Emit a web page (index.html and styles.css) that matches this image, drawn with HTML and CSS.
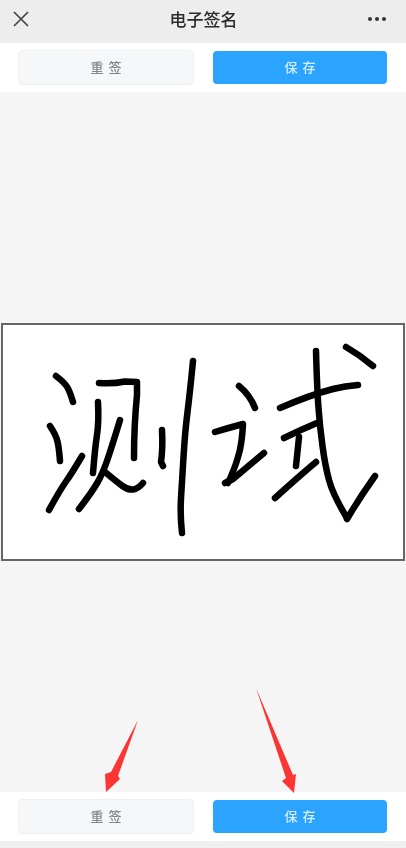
FILE: index.html
```html
<!doctype html>
<html lang="zh-CN">
<head>
    <meta charset="UTF-8">
    <title>电子签名</title>
    <link rel="stylesheet" href="styles.css">
</head>
<body>
    <div class="page">
        <header class="titlebar">
            <svg class="icon" width="16" height="16" viewBox="0 0 16 16">
                <path d="M1 1 L15 15 M15 1 L1 15" class="close-x"/>
            </svg>
            <div class="title">电子签名</div>
            <svg class="icon icon-more" width="18" height="6" viewBox="0 0 18 6">
                <circle cx="2" cy="3" r="2"/>
                <circle cx="9" cy="3" r="2"/>
                <circle cx="16" cy="3" r="2"/>
            </svg>
        </header>

        <div class="toolbar">
            <button class="btn btn-reset">重签</button>
            <button class="btn btn-save">保存</button>
        </div>

        <main class="board">
            <div class="canvas">
                <svg class="signature" viewBox="3 325 400 234">
                    <!-- 测 -->
                    <path d="M56 376 Q65 383 67.5 387.5 Q70 392 73 402"/>
                    <path d="M50 426 Q56 435 57.5 441.5 Q59 448 60 461"/>
                    <path d="M82 456 Q72 473 66 481.5 Q60 490 49 510"/>
                    <path d="M98 402 Q99 422 97 435 Q95 448 93 473"/>
                    <path d="M99 383 Q113 384 125 381.5 L137 382 L137 395 Q134 425 134 458"/>
                    <path d="M120 420 Q113 443 108 458 Q103 473 97.5 482.5 Q92 492 79 509"/>
                    <path d="M105 472 Q117 482 122.5 486 Q128 490 133 489.5 Q138 489 143 483"/>
                    <path d="M162 430 Q163 448 161 462 L163 466"/>
                    <path d="M193 361 Q190 392 187.5 412 Q185 432 183.5 457 Q182 482 181 498 Q180 515 182 533"/>
                    <!-- 试 -->
                    <path d="M239 386 Q250 395 255 408"/>
                    <path d="M215 432 Q228 428 243 424 Q242 445 238 457 Q235 468 228 483"/>
                    <path d="M225 483 L233 479 L264 453"/>
                    <path d="M280 408 Q310 395 333 389 Q345 386 358 385"/>
                    <path d="M316 351 Q317 388 318.5 408 Q320 428 322.5 446 Q325 465 329 480 Q333 495 347 518"/>
                    <path d="M346 347 Q360 355 373 366"/>
                    <path d="M284 438 Q300 430 317 423"/>
                    <path d="M299 437 L296 466"/>
                    <path d="M275 498 Q297 478 316 462"/>
                    <path d="M347 519 Q360 497 375 476"/>
                </svg>
            </div>
        </main>

        <div class="toolbar">
            <button class="btn btn-reset">重签</button>
            <button class="btn btn-save">保存</button>
        </div>
        <div class="bottom-strip"></div>

        <!-- red annotation arrows drawn over the screenshot -->
        <svg class="arrows" width="406" height="848" viewBox="0 0 406 848">
            <polygon points="138,720 111,772 105,774 106,792 120,779 118,776"/>
            <polygon points="256,688 286,778 282,781 294,793 296,774 293,775"/>
        </svg>
    </div>
</body>
</html>
```

FILE: styles.css
```css
* {
    box-sizing: border-box;
}

body {
    margin: 0;
    font-family: "Noto Sans CJK SC", "Liberation Sans", sans-serif;
    background-color: #f5f5f5;
}

.page {
    position: relative;
    width: 406px;
    height: 848px;
    display: flex;
    flex-direction: column;
    overflow: hidden;
    filter: blur(0.5px);
}

.titlebar {
    height: 43px;
    flex: none;
    padding: 0 12px 6px 13px;
    display: grid;
    grid-template-columns: 1fr auto 1fr;
    align-items: center;
    background-color: #ededed;
    color: #2b2b2b;
}

.title {
    font-size: 17px;
    line-height: 24px;
    font-weight: 500;
    margin-top: 1px;
}

.icon {
    display: block;
    fill: #333333;
}

.icon-more {
    justify-self: end;
    margin-right: 8px;
}

.close-x {
    fill: none;
    stroke: #444444;
    stroke-width: 1.7;
}

.toolbar {
    height: 49px;
    flex: none;
    padding: 0 19px 0 18px;
    display: grid;
    grid-template-columns: 176px 174px;
    column-gap: 19px;
    align-items: center;
    background-color: #ffffff;
}

.btn {
    font-family: inherit;
    font-size: 13px;
    font-weight: 500;
    letter-spacing: 5px;
    text-indent: 5px;
    border-radius: 4px;
    padding: 0 0 2px;
}

.btn-reset {
    height: 35px;
    background-color: #f5f7f8;
    border: 1px solid #eef1f3;
    color: #7f858c;
}

.btn-save {
    height: 33px;
    background-color: #2aa4fe;
    border: none;
    color: #d9eeff;
}

.board {
    flex: 1;
    display: flex;
    align-items: center;
    background-color: #f5f5f5;
}

.canvas {
    width: 404px;
    height: 238px;
    margin-left: 1px;
    border: 2px solid #666666;
    background-color: #ffffff;
}

.signature {
    display: block;
    width: 400px;
    height: 234px;
    fill: none;
    stroke: #000000;
    stroke-width: 6.5;
    stroke-linecap: round;
    stroke-linejoin: round;
}

.bottom-strip {
    height: 7px;
    flex: none;
    background-color: #efefef;
}

.arrows {
    position: absolute;
    top: 0;
    left: 0;
    fill: #fb3434;
}
```
